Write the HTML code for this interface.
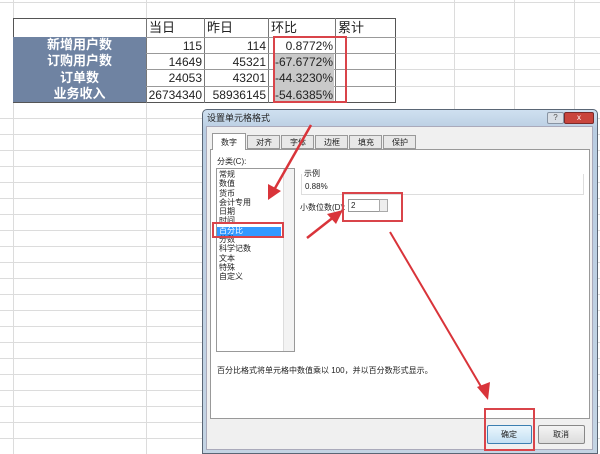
<!DOCTYPE html>
<html><head><meta charset="utf-8"><style>
*{margin:0;padding:0;box-sizing:border-box}
body{width:600px;height:454px;overflow:hidden;background:#fff;position:relative;font-family:"Liberation Sans","Noto Sans CJK SC",sans-serif;}
.a{position:absolute}
.gh{position:absolute;left:0;width:600px;height:1px;background:#dcdcdc}
.gv{position:absolute;top:0;height:454px;width:1px;background:#dcdcdc}
.c{position:absolute;font-size:12px;line-height:16px;color:#222}
.lab{position:absolute;left:13px;width:133px;background:#6f83a2;color:#fff;font-weight:bold;font-size:13px;text-align:center;border-bottom:1px solid #555}
.num{text-align:right}
.sm{font-size:8px;color:#222;position:absolute;line-height:11px}
</style></head><body>
<!-- grid -->
<div class="gh" style="top:2px"></div>
<script></script>
<div class="gh" style="top:118px"></div><div class="gh" style="top:134px"></div><div class="gh" style="top:150px"></div><div class="gh" style="top:166px"></div><div class="gh" style="top:182px"></div><div class="gh" style="top:198px"></div><div class="gh" style="top:214px"></div><div class="gh" style="top:230px"></div><div class="gh" style="top:246px"></div><div class="gh" style="top:262px"></div><div class="gh" style="top:278px"></div><div class="gh" style="top:294px"></div><div class="gh" style="top:310px"></div><div class="gh" style="top:326px"></div><div class="gh" style="top:342px"></div><div class="gh" style="top:358px"></div><div class="gh" style="top:374px"></div><div class="gh" style="top:390px"></div><div class="gh" style="top:406px"></div><div class="gh" style="top:422px"></div><div class="gh" style="top:438px"></div>
<div class="gh" style="top:37px;left:395px"></div><div class="gh" style="top:53px;left:395px"></div><div class="gh" style="top:69px;left:395px"></div><div class="gh" style="top:86px;left:395px"></div>
<div class="gv" style="left:13px"></div><div class="gv" style="left:146px"></div><div class="gv" style="left:454px"></div><div class="gv" style="left:514px"></div><div class="gv" style="left:574px"></div>
<!-- table -->
<div class="a" style="left:13px;top:18px;width:383px;height:85px;background:#fff;border:1px solid #555"></div>
<div class="a" style="left:146px;top:18px;width:1px;height:85px;background:#777"></div>
<div class="a" style="left:204px;top:18px;width:1px;height:85px;background:#777"></div>
<div class="a" style="left:268px;top:18px;width:1px;height:85px;background:#777"></div>
<div class="a" style="left:335px;top:18px;width:1px;height:85px;background:#777"></div>
<div class="a" style="left:146px;top:37px;width:250px;height:1px;background:#999"></div>
<div class="a" style="left:146px;top:53px;width:250px;height:1px;background:#999"></div>
<div class="a" style="left:146px;top:69px;width:250px;height:1px;background:#999"></div>
<div class="a" style="left:146px;top:86px;width:250px;height:1px;background:#999"></div>
<div class="a" style="left:275px;top:54px;width:59px;height:48px;background:#c9c9c9"></div>
<div class="c" style="left:149px;top:20px;font-size:13px">当日</div>
<div class="c" style="left:207px;top:20px;font-size:13px">昨日</div>
<div class="c" style="left:271px;top:20px;font-size:13px">环比</div>
<div class="c" style="left:338px;top:20px;font-size:13px">累计</div>
<div class="lab" style="top:37px;height:17px;line-height:16px">新增用户数</div>
<div class="lab" style="top:53px;height:17px;line-height:16px">订购用户数</div>
<div class="lab" style="top:69px;height:18px;line-height:17px">订单数</div>
<div class="lab" style="top:86px;height:17px;line-height:16px">业务收入</div>
<div class="c num" style="left:146px;width:56px;top:38px">115</div>
<div class="c num" style="left:146px;width:56px;top:54px">14649</div>
<div class="c num" style="left:146px;width:56px;top:70px">24053</div>
<div class="c num" style="left:146px;width:56px;top:87px">26734340</div>
<div class="c num" style="left:204px;width:62px;top:38px">114</div>
<div class="c num" style="left:204px;width:62px;top:54px">45321</div>
<div class="c num" style="left:204px;width:62px;top:70px">43201</div>
<div class="c num" style="left:204px;width:62px;top:87px">58936145</div>
<div class="c num" style="left:268px;width:65px;top:38px">0.8772%</div>
<div class="c num" style="left:268px;width:65px;top:54px">-67.6772%</div>
<div class="c num" style="left:268px;width:65px;top:70px">-44.3230%</div>
<div class="c num" style="left:268px;width:65px;top:87px">-54.6385%</div>
<div class="a" style="left:273px;top:36px;width:74px;height:67px;border:2px solid #d9444a"></div>
<!-- dialog -->
<div class="a" style="left:202px;top:109px;width:396px;height:345px;border:1px solid #5a6675;border-radius:5px 5px 0 0;background:linear-gradient(#cfe0f0,#b9cde2 20px,#c4d4e4)"></div>
<div class="sm" style="left:207px;top:113px;font-size:9px">设置单元格格式</div>
<div class="a" style="left:547px;top:112px;width:17px;height:12px;background:#d9dfe6;border:1px solid #8894a3;border-radius:2px;font-size:8px;text-align:center;line-height:10px;color:#555">?</div>
<div class="a" style="left:564px;top:112px;width:30px;height:12px;background:#c9453d;border:1px solid #7a2a2a;border-radius:2px;font-size:8px;text-align:center;line-height:10px;color:#fff">x</div>
<div class="a" style="left:206px;top:126px;width:387px;height:324px;background:#f0f0f0;border:1px solid #aab"></div>
<div class="a" style="left:210px;top:149px;width:380px;height:270px;background:#fff;border:1px solid #999"></div>
<div class="a" style="left:212px;top:133px;width:34px;height:17px;background:#fff;border:1px solid #999;border-bottom:none"></div>
<div class="sm" style="left:221px;top:137px">数字</div>
<div class="a" style="left:247px;top:135px;width:33px;height:14px;background:#e8e8e8;border:1px solid #999"></div><div class="sm" style="left:256px;top:137px">对齐</div>
<div class="a" style="left:281px;top:135px;width:33px;height:14px;background:#e8e8e8;border:1px solid #999"></div><div class="sm" style="left:290px;top:137px">字体</div>
<div class="a" style="left:315px;top:135px;width:33px;height:14px;background:#e8e8e8;border:1px solid #999"></div><div class="sm" style="left:324px;top:137px">边框</div>
<div class="a" style="left:349px;top:135px;width:33px;height:14px;background:#e8e8e8;border:1px solid #999"></div><div class="sm" style="left:358px;top:137px">填充</div>
<div class="a" style="left:383px;top:135px;width:33px;height:14px;background:#e8e8e8;border:1px solid #999"></div><div class="sm" style="left:392px;top:137px">保护</div>
<div class="sm" style="left:217px;top:156px">分类(C):</div>
<div class="a" style="left:216px;top:168px;width:79px;height:184px;border:1px solid #999;background:#fff"></div>
<div class="a" style="left:283px;top:169px;width:11px;height:182px;background:#f3f3f3;border-left:1px solid #ddd"></div>
<div class="a" style="left:217px;top:227px;width:64px;height:11px;background:#3399ff"></div>
<div class="sm" style="left:219px;top:170px;line-height:9.3px">常规<br>数值<br>货币<br>会计专用<br>日期<br>时间<br><span style="color:#fff">百分比</span><br>分数<br>科学记数<br>文本<br>特殊<br>自定义</div>
<div class="a" style="left:212px;top:222px;width:72px;height:16px;border:2px solid #d9444a"></div>
<div class="sm" style="left:304px;top:168px">示例</div>
<div class="a" style="left:301px;top:174px;width:283px;height:21px;border:1px solid #ddd;border-top:none"></div>
<div class="sm" style="left:305px;top:181px">0.88%</div>
<div class="sm" style="left:300px;top:202px">小数位数(D):</div>
<div class="a" style="left:348px;top:199px;width:38px;height:13px;border:1px solid #999;background:#fff"></div>
<div class="sm" style="left:351px;top:200px">2</div>
<div class="a" style="left:379px;top:199px;width:9px;height:13px;border:1px solid #aaa;background:#eee"></div>
<div class="a" style="left:342px;top:192px;width:61px;height:30px;border:2px solid #d9444a"></div>
<div class="sm" style="left:217px;top:365px">百分比格式将单元格中数值乘以 100，并以百分数形式显示。</div>
<div class="a" style="left:487px;top:425px;width:45px;height:19px;border:1px solid #3c7fb1;border-radius:2px;background:linear-gradient(#eaf6fd,#c4e0f3)"></div>
<div class="sm" style="left:501px;top:429px">确定</div>
<div class="a" style="left:538px;top:425px;width:47px;height:19px;border:1px solid #888;border-radius:2px;background:linear-gradient(#f4f4f4,#dcdcdc)"></div>
<div class="sm" style="left:553px;top:429px">取消</div>
<div class="a" style="left:484px;top:408px;width:51px;height:43px;border:2px solid #d9444a"></div>
<!-- arrows -->
<svg class="a" style="left:0;top:0" width="600" height="454">
<g stroke="#d9343a" stroke-width="2.5" fill="#d9343a">
<line x1="311" y1="125" x2="274" y2="190"/>
<polygon points="268,200 268,184 281,191" stroke="none"/>
<line x1="307" y1="238" x2="335" y2="216"/>
<polygon points="343,210 327,214 336,224" stroke="none"/>
<line x1="390" y1="232" x2="483" y2="390" stroke-width="2"/>
<polygon points="488,400 477,387 490,382" stroke="none"/>
</g></svg>
</body></html>
